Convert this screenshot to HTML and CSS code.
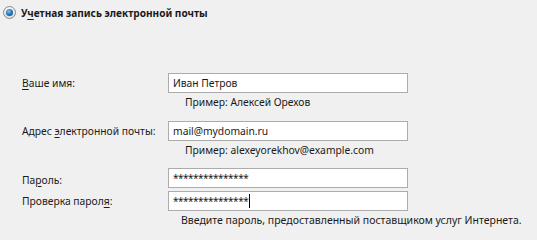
FILE: index.html
```html
<!DOCTYPE html>
<html lang="ru">
<head>
    <meta charset="UTF-8">
    <title>Учетная запись электронной почты</title>
    <link rel="stylesheet" href="styles.css">
</head>
<body>
    <div class="account">
        <label class="account-choice">
            <span class="radio"><span class="radio-dot"></span></span>
            <span class="choice-text">У<u>ч</u>етная запись электронной почты</span>
        </label>

        <div class="form">
            <div class="field-label"><u>В</u>аше имя:</div>
            <div class="field"><div class="input">Иван Петров</div></div>
            <div class="hint">Пример: Алексей Орехов</div>

            <div class="field-label">Адрес <u>э</u>лектронной почты:</div>
            <div class="field"><div class="input">mail@mydomain.ru</div></div>
            <div class="hint hint-short">Пример: alexeyorekhov@example.com</div>

            <div class="field-label">Па<u>р</u>оль:</div>
            <div class="field field-tight"><div class="input stars">***************</div></div>

            <div class="field-label">Проверка парол<u>я</u>:</div>
            <div class="field"><div class="input stars">***************<span class="caret"></span></div></div>
            <div class="hint hint-wide">Введите пароль, предоставленный поставщиком услуг Интернета.</div>
        </div>
    </div>
</body>
</html>
```
FILE: styles.css
```css
* {
    margin: 0;
    padding: 0;
    box-sizing: border-box;
}

body {
    font-family: 'Noto Sans', 'Open Sans', sans-serif;
    font-size: 10.3px;
    color: #1a1a1a;
    background: #f0f0f0;
    width: 537px;
    height: 240px;
    overflow: hidden;
}

u {
    text-decoration: underline;
    text-underline-offset: 2px;
}

.account {
    padding: 5px 0 0 3px;
}

.account-choice {
    display: flex;
    align-items: center;
    gap: 5px;
    height: 15px;
}

.radio {
    width: 13px;
    height: 13px;
    border-radius: 50%;
    border: 1px solid #8a8a8a;
    background: linear-gradient(180deg, #f4f4f4 0%, #dcdcdc 100%);
    display: flex;
    justify-content: center;
    align-items: center;
}

.radio-dot {
    width: 7px;
    height: 7px;
    border-radius: 50%;
    background: radial-gradient(circle at 40% 35%, #7fc4f0 0%, #1c6fb0 55%, #0d3f6e 100%);
}

.choice-text {
    font-weight: bold;
    font-size: 10.1px;
}

.form {
    display: grid;
    grid-template-columns: 146px 240px;
    align-items: center;
    margin: 53px 0 0 19px;
}

.field-label {
    grid-column: 1;
    line-height: 20px;
}

.field {
    grid-column: 2;
}

.field-tight {
    margin-bottom: 3px;
}

.input {
    height: 20px;
    border: 1px solid #acacac;
    background: #ffffff;
    padding: 0 4px;
    line-height: 18px;
    white-space: nowrap;
    display: flex;
    align-items: center;
}

.stars {
    font-size: 10px;
    letter-spacing: -0.5px;
}

.caret {
    width: 1px;
    height: 14px;
    background: #000000;
    margin-left: 1px;
}

.hint {
    grid-column: 2;
    padding-left: 17px;
    line-height: 18px;
    margin-bottom: 10px;
    white-space: nowrap;
}

.hint-short {
    margin-bottom: 9px;
}

.hint-wide {
    padding-left: 13px;
    font-size: 10.5px;
}
```
